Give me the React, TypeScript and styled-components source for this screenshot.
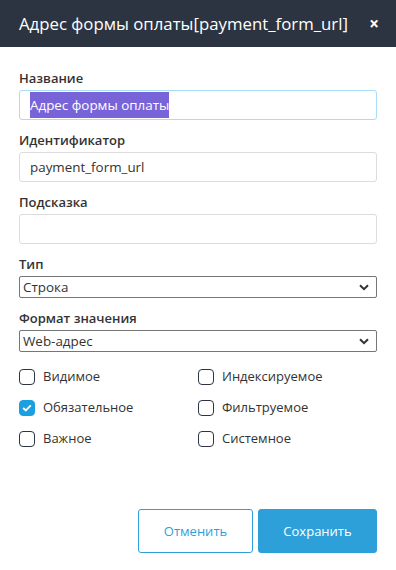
import React, { FC } from 'react';
import styled, { createGlobalStyle } from 'styled-components';

const GlobalStyle = createGlobalStyle`
  body {
    margin: 0;
    background: #fff;
    font-family: "Open Sans", "Noto Sans", sans-serif;
    color: #333;
  }
`

const Modal = styled.div`
  width: 396px;
  height: 570px;
  display: flex;
  flex-direction: column;
  background: #fff;
`

const Header = styled.div`
  height: 47px;
  background: #2c3442;
  display: flex;
  align-items: center;
  justify-content: space-between;
  padding: 0 17px 0 19px;
  color: #fff;
`

const Title = styled.h1`
  margin: 0;
  font-size: 16.8px;
  font-weight: 400;
`

const Close = styled.span`
  font-size: 17px;
  font-weight: 700;
  line-height: 1;
`

const Body = styled.div`
  flex: 1;
  display: flex;
  flex-direction: column;
  padding: 22px 19px 0;
`

const Field = styled.div`
  display: flex;
  flex-direction: column;
  gap: 3px;
  margin-bottom: 11px;
`

const Label = styled.label`
  font-size: 13px;
  font-weight: 600;
  line-height: 18px;
  color: #333;
`

const TextBox = styled.div<{ $focused?: boolean }>`
  height: 30px;
  box-sizing: border-box;
  border: 1px solid ${({ $focused }) => ($focused ? '#a8def5' : '#dcdcdc')};
  border-radius: 3px;
  padding: 1px 10px;
  display: flex;
  align-items: center;
  font-size: 13.4px;
  color: #333;
`

const Selected = styled.span`
  background: #7864d8;
  color: #fff;
  line-height: 26px;
`

const SelectBox = styled.div`
  height: 22px;
  box-sizing: border-box;
  border: 1px solid #767676;
  border-radius: 2px;
  padding: 0 7px 0 3px;
  display: flex;
  align-items: center;
  justify-content: space-between;
  font-size: 13.4px;
  color: #333;
`

const Checks = styled.div`
  display: grid;
  grid-template-columns: 1fr 1fr;
  row-gap: 14px;
  margin-top: 5px;
`

const Check = styled.label`
  display: flex;
  align-items: center;
  gap: 8px;
  font-size: 13px;
  line-height: 17px;
  color: #333;
`

const Box = styled.span<{ $on?: boolean }>`
  width: 16px;
  height: 16px;
  box-sizing: border-box;
  border-radius: 4px;
  border: 1.5px solid ${({ $on }) => ($on ? '#1aa0e0' : '#2c3442')};
  background: ${({ $on }) => ($on ? '#1aa0e0' : '#fff')};
  display: flex;
  align-items: center;
  justify-content: center;
`

const Footer = styled.div`
  margin-top: auto;
  display: flex;
  justify-content: flex-end;
  gap: 5px;
  padding: 0 19px 17px;
`

const Button = styled.button<{ $primary?: boolean }>`
  height: 44px;
  width: ${({ $primary }) => ($primary ? '119px' : '115px')};
  border-radius: 3px;
  font-family: inherit;
  font-size: 13px;
  border: 1px solid #2d9fd9;
  background: ${({ $primary }) => ($primary ? '#2d9fd9' : '#fff')};
  color: ${({ $primary }) => ($primary ? '#fff' : '#2d9fd9')};
`

const Chevron: FC = () => (
  <svg width="10" height="7" viewBox="0 0 10 7">
    <path d="M1 1.2 L5 5.2 L9 1.2" fill="none" stroke="#333" strokeWidth="2" />
  </svg>
)

const Tick: FC = () => (
  <svg width="10" height="8" viewBox="0 0 10 8">
    <path d="M1.2 4 L3.8 6.4 L8.8 1.4" fill="none" stroke="#fff" strokeWidth="1.8" />
  </svg>
)

const flags = [
  { label: 'Видимое', on: false },
  { label: 'Индексируемое', on: false },
  { label: 'Обязательное', on: true },
  { label: 'Фильтруемое', on: false },
  { label: 'Важное', on: false },
  { label: 'Системное', on: false },
]

const App: FC = () => (
  <Modal>
    <GlobalStyle />
    <Header>
      <Title>Адрес формы оплаты[payment_form_url]</Title>
      <Close>×</Close>
    </Header>
    <Body>
      <Field>
        <Label>Название</Label>
        <TextBox $focused>
          <Selected>Адрес формы оплаты</Selected>
        </TextBox>
      </Field>
      <Field>
        <Label>Идентификатор</Label>
        <TextBox>payment_form_url</TextBox>
      </Field>
      <Field>
        <Label>Подсказка</Label>
        <TextBox />
      </Field>
      <Field>
        <Label>Тип</Label>
        <SelectBox>
          <span>Строка</span>
          <Chevron />
        </SelectBox>
      </Field>
      <Field>
        <Label>Формат значения</Label>
        <SelectBox>
          <span>Web-адрес</span>
          <Chevron />
        </SelectBox>
      </Field>
      <Checks>
        {flags.map((f) => (
          <Check key={f.label}>
            <Box $on={f.on}>{f.on && <Tick />}</Box>
            {f.label}
          </Check>
        ))}
      </Checks>
    </Body>
    <Footer>
      <Button>Отменить</Button>
      <Button $primary>Сохранить</Button>
    </Footer>
  </Modal>
);

export default App;
